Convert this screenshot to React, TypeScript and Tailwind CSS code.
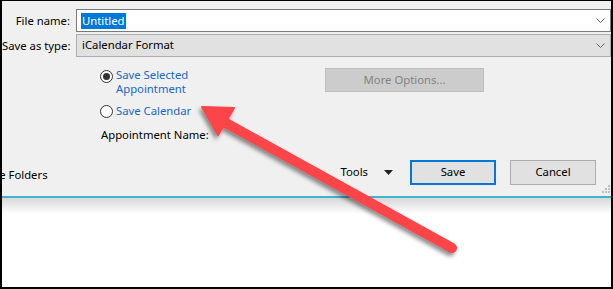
import React from 'react';

const Chevron: React.FC = () => (
  <svg width="9" height="5" viewBox="0 0 9 5" className="text-[#606060]">
    <path d="M0.5 0.5 L4.5 4.5 L8.5 0.5" fill="none" stroke="currentColor" strokeWidth="1" />
  </svg>
);

const Radio: React.FC<{ checked?: boolean }> = ({ checked }) => (
  <span className="w-[13px] h-[13px] rounded-full border border-[#333] bg-white flex items-center justify-center shrink-0">
    {checked && <span className="w-[7px] h-[7px] rounded-full bg-[#333]" />}
  </span>
);

const App: React.FC = () => {
  return (
    <div
      className="relative w-[613px] h-[289px] overflow-hidden bg-white border-l-2 border-r-2 border-t border-b-2 border-black text-[11.3px] text-black"
      style={{ fontFamily: '"Noto Sans", "Open Sans", sans-serif' }}
    >
      <div className="h-[195px] bg-[#f0f0f0] flex flex-col pt-[8px]">
        {/* file name */}
        <div className="flex items-center h-[23px]">
          <div className="w-[69px] text-right pr-[1px] leading-none">File name:</div>
          <div className="ml-[5px] flex-1 h-[23px] bg-white border border-[#7a7a7a] flex items-center pl-[4px] pr-[5px]">
            <span className="bg-[#0078d7] text-white px-[1px] leading-[16px]">Untitled</span>
            <span className="flex-1" />
            <Chevron />
          </div>
        </div>
        {/* type */}
        <div className="flex items-center h-[23px] mt-[2px]">
          <div className="w-[69px] text-right pr-[1px] leading-none whitespace-nowrap">Save as type:</div>
          <div className="ml-[5px] flex-1 h-[23px] bg-[#e1e1e1] border border-[#adadad] flex items-center pl-[5px] pr-[5px]">
            <span>iCalendar Format</span>
            <span className="flex-1" />
            <Chevron />
          </div>
        </div>
        {/* options */}
        <div className="flex mt-[11px] pl-[98px]">
          <div className="w-[225px] flex flex-col">
            <div className="flex items-start gap-[3px]">
              <div className="pt-[2px]"><Radio checked /></div>
              <div className="text-[#1a67c9] leading-[14px]">Save Selected<br />Appointment</div>
            </div>
            <div className="flex items-center gap-[3px] mt-[8px]">
              <Radio />
              <div className="text-[#1a67c9] leading-[14px]">Save Calendar</div>
            </div>
            <div className="mt-[10px] leading-[14px] pl-[1px]">Appointment Name:</div>
          </div>
          <button className="w-[159px] h-[24px] bg-[#cccccc] border border-[#bfbfbf] text-[#838383] flex items-center justify-center">
            More Options...
          </button>
        </div>
        {/* bottom bar */}
        <div className="flex items-center mt-auto mb-[11px] relative">
          <div className="-ml-[21px] pt-[6px] whitespace-nowrap">Hide Folders</div>
          <div className="flex-1" />
          <div className="flex items-center mr-[17px]">
            <span>Tools</span>
            <svg width="9" height="5" viewBox="0 0 9 5" className="ml-[16px]">
              <path d="M0 0 L9 0 L4.5 5 Z" fill="#222" />
            </svg>
          </div>
          <button className="w-[86px] h-[25px] bg-[#e1e1e1] border-2 border-[#0078d7] flex items-center justify-center">
            Save
          </button>
          <button className="ml-[14px] w-[86px] h-[25px] bg-[#e1e1e1] border border-[#adadad] flex items-center justify-center mr-[15px]">
            Cancel
          </button>
          <div className="absolute right-[1px] bottom-[-8px] grid grid-cols-3 gap-[1px]">
            {[0, 0, 1, 0, 1, 1, 1, 1, 1].map((v, i) => (
              <span key={i} className={v ? 'w-[2px] h-[2px] bg-[#c0c0c0]' : 'w-[2px] h-[2px]'} />
            ))}
          </div>
        </div>
      </div>
      <div className="h-[2px] bg-[#3cb6cf]" />
      <div className="h-[16px] bg-gradient-to-b from-[#d8d8d8] to-white" />

      {/* red arrow */}
      <svg className="absolute left-0 top-0" width="613" height="289" viewBox="0 0 613 289">
        <defs>
          <filter id="sh" x="-20%" y="-20%" width="140%" height="140%">
            <feDropShadow dx="-2" dy="3" stdDeviation="2" floodColor="#000" floodOpacity="0.45" />
          </filter>
        </defs>
        <g filter="url(#sh)">
          <line x1="222" y1="121" x2="450" y2="247" stroke="#fb4448" strokeWidth="10" strokeLinecap="round" />
          <path d="M200 106 L232 107 L216 134 Z" fill="#fb4448" stroke="#fb4448" strokeWidth="2" strokeLinejoin="round" />
        </g>
      </svg>
    </div>
  );
};

export default App;
